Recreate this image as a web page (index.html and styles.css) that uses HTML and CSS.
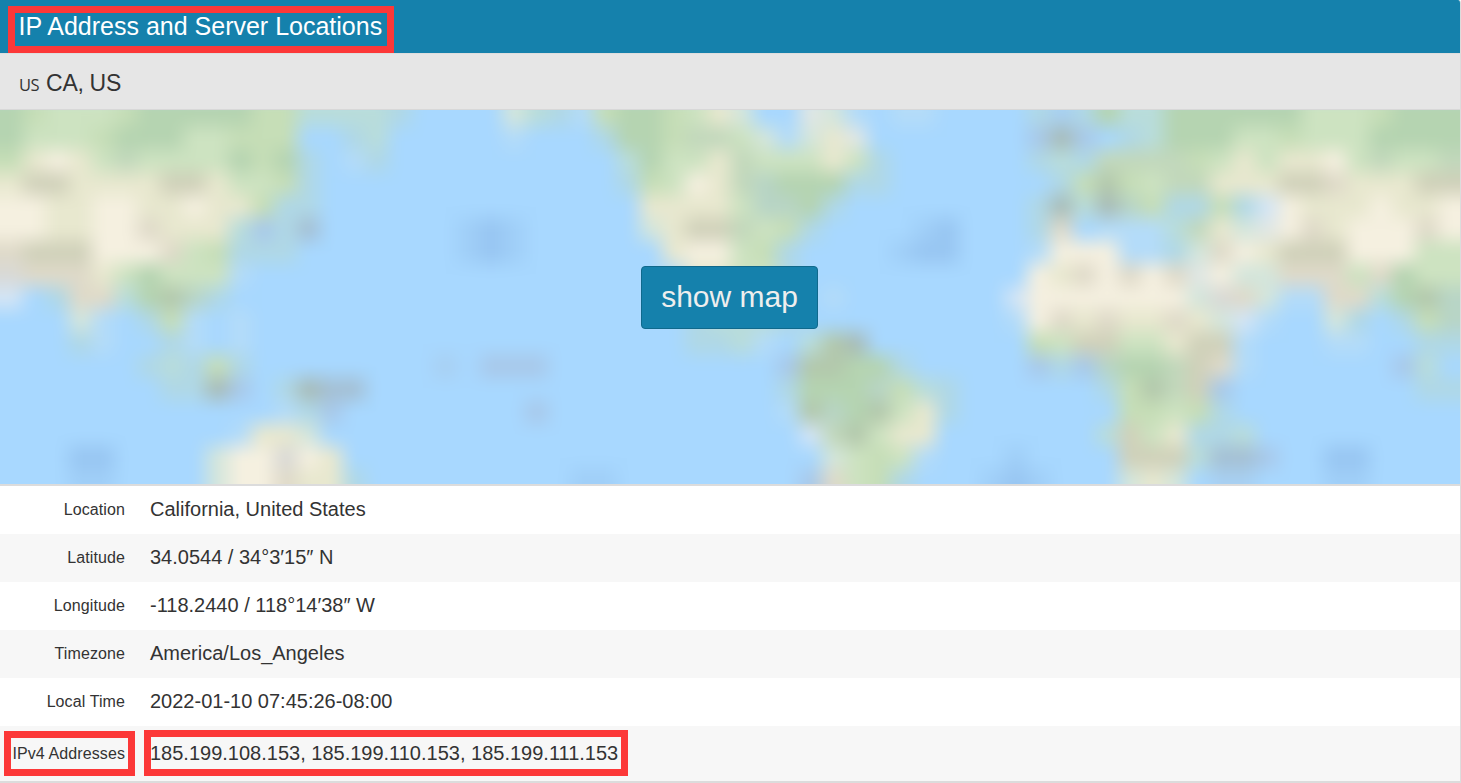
FILE: index.html
```html
<!DOCTYPE html>
<html lang="en">
<head>
<meta charset="utf-8">
<title>IP Address and Server Locations</title>
<link rel="stylesheet" href="styles.css">
</head>
<body>
<section class="panel">
  <header class="panel-header"><h1 class="panel-title">IP Address and Server Locations</h1></header>
  <div class="place"><span class="flag">US</span><span class="place-name">CA, US</span></div>
  <div class="map">
    <canvas class="map-canvas" width="66" height="18"></canvas>
    <button class="map-button" type="button">show map</button>
  </div>
  <dl class="details">
    <div class="row"><dt>Location</dt><dd>California, United States</dd></div>
    <div class="row"><dt>Latitude</dt><dd>34.0544 / 34°3′15″ N</dd></div>
    <div class="row"><dt>Longitude</dt><dd>-118.2440 / 118°14′38″ W</dd></div>
    <div class="row"><dt>Timezone</dt><dd>America/Los_Angeles</dd></div>
    <div class="row"><dt>Local Time</dt><dd>2022-01-10 07:45:26-08:00</dd></div>
    <div class="row row-last"><dt>IPv4 Addresses</dt><dd>185.199.108.153, 185.199.110.153, 185.199.111.153</dd></div>
  </dl>
  <div class="mark mark-title"></div>
  <div class="mark mark-label"></div>
  <div class="mark mark-value"></div>
</section>
<script src="map.js"></script>
</body>
</html>
```
FILE: styles.css
```css
* { box-sizing: border-box; }
body {
  margin: 0;
  background: #fff;
  color: #333;
  font-family: "Liberation Sans", Arial, sans-serif;
}
.panel {
  position: relative;
  width: 1461px;
  height: 783px;
  overflow: hidden;
  border-right: 1px solid #dcdcdc;
  border-bottom: 2px solid #dcdcdc;
  border-top-right-radius: 3px;
}
.panel-header {
  height: 53px;
  padding-left: 18.5px;
  background: #1581ac;
}
.panel-title {
  margin: 0;
  color: #fff;
  font-size: 25px;
  font-weight: 400;
  line-height: 53px;
  white-space: nowrap;
}
.place {
  display: flex;
  align-items: baseline;
  gap: 7px;
  height: 57px;
  padding-left: 19px;
  background: #e6e6e6;
  border-top: 1px solid #dedede;
  border-bottom: 1px solid #d8d8d8;
  line-height: 58px;
}
.flag {
  font-family: "Open Sans", sans-serif;
  font-size: 16.5px;
  letter-spacing: -0.5px;
}
.place-name { font-size: 23px; letter-spacing: -0.3px; }
.map {
  display: grid;
  grid-template-columns: 1460px;
  height: 376px;
  overflow: hidden;
  background: #a8d8ff;
  border-bottom: 2px solid #dcdcdc;
}
.map-canvas {
  grid-area: 1 / 1;
  width: 1505.6px;
  height: 410.8px;
  margin: -7px 0 0 -22.8px;
  filter: blur(5px);
}
.map-button {
  grid-area: 1 / 1;
  justify-self: center;
  z-index: 1;
  width: 177px;
  height: 63px;
  margin: 156px 1px 0 0;
  padding: 0 0 2px;
  border: 1px solid #10698c;
  border-radius: 4px;
  background: #1581ac;
  color: #eee;
  font: 30px "Liberation Sans", Arial, sans-serif;
}
.details { margin: 0; }
.row {
  display: flex;
  align-items: center;
  height: 48px;
  line-height: 46px;
  white-space: nowrap;
}
.row:nth-child(even) { background: #f7f7f7; }
.row-last { height: 55px; }
.row dt {
  width: 125px;
  font-size: 16px;
  letter-spacing: 0.1px;
  text-align: right;
}
.row dd { margin: 0 0 2px 25px; font-size: 20px; }
.mark { position: absolute; border: 7px solid #fc3838; }
.mark-title { left: 8px; top: 6px; width: 386px; height: 47px; }
.mark-label { left: 4px; top: 731px; width: 131px; height: 45px; }
.mark-value { left: 144px; top: 730px; width: 484px; height: 46px; }
```
FILE: map.js
```js
// Terrain colours of the coarse world map preview.
const terrain = {
  '.': '#a8d8ff', q: '#b4dcf9', s: '#b0d8e6', p: '#b9dddb', W: '#d3e5f6',
  d: '#98c6f2', D: '#a0cff8', h: '#a8c9ea', i: '#a8d0f2', n: '#a5c0d4', m: '#a8bcb8',
  g: '#b5d4b1', j: '#b8d5c6', f: '#c2d8bc', y: '#c6deb7', l: '#cde3c1', o: '#b3c8ac',
  v: '#d4e6dc', e: '#e8e8cf', c: '#f5f0e0', t: '#dfdac9', k: '#d0d1ba', w: '#e0e7e5', u: '#d9d9d6'
};

// One string per row, four groups of sixteen cells.
const rows = [
  'gylllygggggyyppp ps....vpsqyggyle v..wvq.qq....sis gppgggggglllyggg',
  'glllygggllyyy..s p.....q...sggyff lvqvew.......hmh .spgggllylllgggg',
  'yecelfllllgygs.q s..........pglle flllels......sps ffffyleleeclfllf',
  'ekkeeeekkellys.. ...........sylce fjgggss.......sy oylffeeekkteeekk',
  'cceecceeceeyss.. ............eeee ljjgs........smp mjyssysWceeeceec',
  'cceeccteeephsn.. ....DdD.....vekk flys....Dd...st. qqqpfevwcteccctc',
  'tkkkccctlysss... ....DdD......ecc lys....Ddd...qcc cqqsvtcekkkcccll',
  'utttelglllq..... .............qee lls..........cet ctctwcvvtttltgll',
  'W.sttpgojs...... ..............ee yys.q.......Wccc ccccvutvqqttpgoj',
  '...vq.syq.q..... ..............sp pps.........qcte teetevWq..vs.syj',
  '...sq..sq.q..... ..............ss pq.pom.......ylk kllekkq...qq..ss',
  '......spsys..... ...i.hhh........ ..hooggs.....hsh jggfktq......hp.',
  '.......ssmh.smnn ................ ..sgggjyps...... syofkh........ss',
  '............qsh. .......h........ ..qojgoles...... .yylys..........',
  '..........qeev.. ................ ...Wfolee....... pklessp.........',
  '...dd....vccuce. ................ ....vlylq...D... .kkkpnnh..dd....',
  '...DD....vcctees .........DD..... ...htlys...DdD.. .vev.ii...DD....'
];

// The first and last cells repeat beyond the visible edges.
const canvas = document.querySelector('.map-canvas');
const ctx = canvas.getContext('2d');
for (let y = 0; y < canvas.height; y++) {
  const cells = rows[Math.min(y, rows.length - 1)].replace(/ /g, '');
  for (let x = 0; x < canvas.width; x++) {
    ctx.fillStyle = terrain[cells[Math.min(Math.max(x - 1, 0), cells.length - 1)]];
    ctx.fillRect(x, y, 1, 1);
  }
}
```
